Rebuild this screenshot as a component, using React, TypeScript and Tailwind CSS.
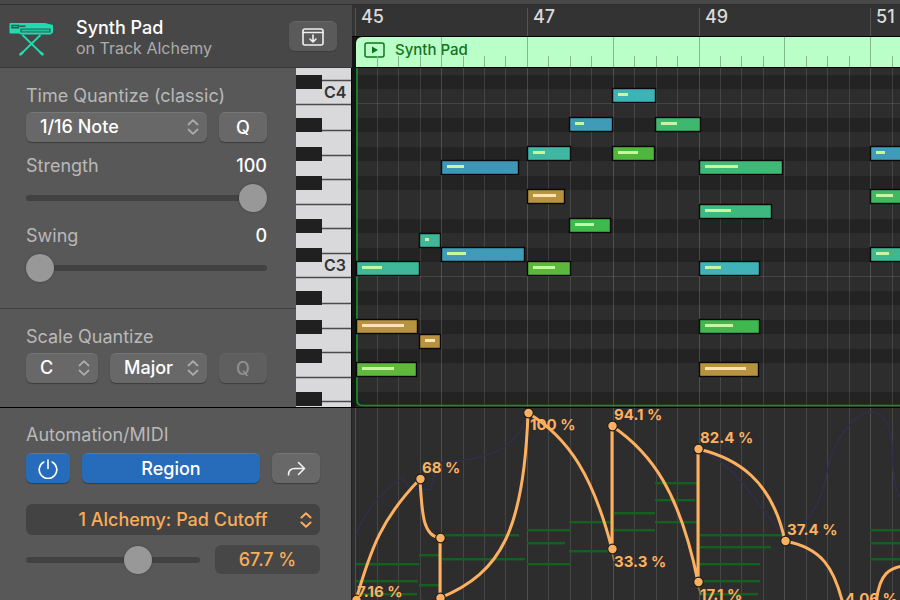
import { useState } from 'react';
import type { ReactNode } from 'react';
import clsx from 'clsx';

// Timeline geometry, shared by the ruler, the region, the roll and the automation lane
const ORIGIN = 3.3;
const BEAT = 21.45;
const SEMITONE = 14.42;
const C3_TOP = 193.4;
const ROLL_HEIGHT = 339;
const BARS = [45, 47, 49, 51];
const TICKS = Array.from({ length: 160 }, (_, i) => i);

const tickX = (tick: number) => Math.round(ORIGIN + tick * BEAT);
const rowTop = (row: number) => Math.round(C3_TOP - row * SEMITONE);

interface Note {
  x: number;
  w: number;
  // semitones above C3
  row: number;
  color: string;
  velocity: number;
}

const NOTES: Note[] = [
  { x: 4, w: 63, row: 0, color: '#3eb899', velocity: 20 },
  { x: 175, w: 43, row: 0, color: '#5cb83c', velocity: 22 },
  { x: 347, w: 60, row: 0, color: '#3fb3b8', velocity: 16 },
  { x: 89, w: 83, row: 1, color: '#3f9bb8', velocity: 19 },
  { x: 518, w: 64, row: 1, color: '#3eb890', velocity: 13 },
  { x: 67, w: 21, row: 2, color: '#3eb899', velocity: 4 },
  { x: 217, w: 41, row: 3, color: '#3fb84c', velocity: 19 },
  { x: 347, w: 72, row: 4, color: '#3eb87f', velocity: 26 },
  { x: 175, w: 37, row: 5, color: '#b8933f', velocity: 23 },
  { x: 518, w: 64, row: 5, color: '#3fb860', velocity: 17 },
  { x: 89, w: 77, row: 7, color: '#3f97b8', velocity: 17 },
  { x: 347, w: 83, row: 7, color: '#3fb878', velocity: 33 },
  { x: 175, w: 43, row: 8, color: '#3eb8a2', velocity: 12 },
  { x: 260, w: 42, row: 8, color: '#4fb83c', velocity: 20 },
  { x: 518, w: 64, row: 8, color: '#3f9bb8', velocity: 9 },
  { x: 217, w: 43, row: 10, color: '#3f9bb8', velocity: 9 },
  { x: 303, w: 45, row: 10, color: '#3eb86e', velocity: 16 },
  { x: 260, w: 43, row: 12, color: '#3fb2b8', velocity: 10 },
  { x: 4, w: 61, row: -4, color: '#b8933f', velocity: 42 },
  { x: 347, w: 60, row: -4, color: '#3fb852', velocity: 28 },
  { x: 67, w: 21, row: -5, color: '#b8933f', velocity: 10 },
  { x: 4, w: 60, row: -7, color: '#5fb83c', velocity: 32 },
  { x: 347, w: 59, row: -7, color: '#b8933f', velocity: 41 },
];

// [x, y, width] of the region's notes, seen behind the automation curve
const GHOST_NOTES = [
  [4, 156, 63], [4, 173, 62], [4, 186, 61],
  [67, 147, 21], [67, 177, 21],
  [89, 127, 78], [89, 151, 84],
  [175, 122, 44], [175, 135, 38], [175, 156, 44],
  [217, 114, 43], [217, 143, 41],
  [261, 105, 42], [261, 122, 42],
  [303, 75, 43], [303, 92, 40], [303, 114, 43],
  [348, 127, 84], [348, 139, 71], [348, 156, 60], [348, 173, 60], [348, 186, 58],
  [518, 122, 64], [518, 135, 64], [518, 151, 64],
];

const POINTS = [
  [4, 192], [68, 71], [88, 130], [88, 190], [176, 5], [260, 141],
  [260, 18], [346, 174], [346, 41], [433, 133],
];

const POINT_LABELS = [
  { text: '7.16 %', x: 5, y: 189 },
  { text: '68 %', x: 70, y: 65 },
  { text: '100 %', x: 178, y: 22 },
  { text: '94.1 %', x: 262, y: 12 },
  { text: '33.3 %', x: 262, y: 159 },
  { text: '82.4 %', x: 348, y: 35 },
  { text: '17.1 %', x: 348, y: 192 },
  { text: '37.4 %', x: 435, y: 127 },
  { text: '4.06 %', x: 493, y: 196 },
];

const BLACK_KEY_STEPS = [1, 3, 6, 8, 10];
const ROWS = Array.from({ length: 26 }, (_, i) => i - 11);
const isBlackKey = (row: number) => BLACK_KEY_STEPS.includes((row + 24) % 12);

function Chevrons({ className }: { className?: string }) {
  return (
    <svg className={clsx('pointer-events-none absolute top-1/2 h-4 w-3 -translate-y-1/2', className)} viewBox="0 0 12 16" fill="none" stroke="currentColor" strokeLinecap="round" strokeLinejoin="round">
      <path d="M1.5 5.5 6 1.2l4.5 4.3M1.5 10.5 6 14.8l4.5-4.3" />
    </svg>
  );
}

interface PopupProps {
  label: string;
  options: string[];
  className?: string;
}

function Popup({ label, options, className }: PopupProps) {
  return (
    <div className={clsx('relative', className)}>
      <select
        aria-label={label}
        className="h-[30px] w-full appearance-none rounded-md border-t border-[#777] bg-[#686868] pr-6 pb-0.5 pl-3.5 text-[18px] font-medium text-white shadow-[0_1px_1px_#3c3c3c]"
      >
        {options.map((option) => (
          <option key={option}>{option}</option>
        ))}
      </select>
      <Chevrons className="right-2 stroke-[1.8] text-[#ababab]" />
    </div>
  );
}

interface PushButtonProps {
  label: string;
  className?: string;
  disabled?: boolean;
  children: ReactNode;
}

function PushButton({ label, className, disabled, children }: PushButtonProps) {
  return (
    <button
      type="button"
      aria-label={label}
      disabled={disabled}
      className={clsx('flex h-[30px] items-center justify-center rounded-md border-t text-[18px] font-medium shadow-[0_1px_1px_#3c3c3c]', className)}
    >
      {children}
    </button>
  );
}

function Slider({ id, label, initial, className }: { id: string; label?: string; initial: number; className?: string }) {
  const [value, setValue] = useState(initial);
  return (
    <input
      id={id}
      aria-label={label}
      type="range"
      min={0}
      max={100}
      value={value}
      onChange={(e) => setValue(Number(e.target.value))}
      className={clsx(
        'block h-7 appearance-none bg-transparent',
        '[&::-webkit-slider-runnable-track]:h-1.5 [&::-webkit-slider-runnable-track]:rounded-full [&::-webkit-slider-runnable-track]:bg-[#424242]',
        '[&::-webkit-slider-thumb]:-mt-[11px] [&::-webkit-slider-thumb]:size-7 [&::-webkit-slider-thumb]:appearance-none [&::-webkit-slider-thumb]:rounded-full [&::-webkit-slider-thumb]:bg-[#989898] [&::-webkit-slider-thumb]:shadow-[0_0_2px_#3a3a3a]',
        className,
      )}
    />
  );
}

function SynthIcon() {
  return (
    <svg className="h-[34px] w-[45px]" viewBox="0 0 45 34" fill="none">
      <path d="M1.500 1H36L44 3V10.500L41.500 12.500H12L10 11.500H1.500Q.5 11.500.5 10.500V2Q.5 1 1.500 1Z" fill="#1fdcb0" />
      <path d="M3 3.500H9.500V5.800H3ZM10.500 4.200H16.500" stroke="#2f5a50" strokeWidth="1.4" />
      <path d="M12 7H41V10H12Z" fill="#27c19e" stroke="#2f5a50" strokeWidth="1.200" />
      <path d="M13.500 13 33 32M31.500 13 12 32" stroke="#1fdcb0" strokeWidth="1.8" />
      <path d="M11.500 32.300l1.800-1.600M33.500 32.300l-1.800-1.600" stroke="#1fdcb0" strokeWidth="2.600" strokeLinecap="round" />
    </svg>
  );
}

function TrackHeader() {
  return (
    <header className="flex h-[63px] items-center border-b border-[#383838] bg-[#474747] pr-[15px] pl-[9px]">
      <div className="pt-1.5">
        <SynthIcon />
      </div>
      <div className="ml-[22px] flex-1 pt-[3px]">
        <h1 className="text-[18px] leading-[21px] font-medium text-white">Synth Pad</h1>
        <p className="text-[16px] leading-[21px] text-[#acacac]">on Track Alchemy</p>
      </div>
      <PushButton label="Show in inspector" className="w-12 border-[#666] bg-[#5a5a5a] text-[#f0f0f0]">
        <svg className="h-[18px] w-[22px]" viewBox="0 0 22 18" fill="none" stroke="currentColor" strokeWidth="1.6" strokeLinecap="round" strokeLinejoin="round">
          <rect x="1" y="1" width="20" height="16" rx="2" />
          <path d="M1 4.500h20M11 7v6.500M8 11l3 3 3-3" />
        </svg>
      </PushButton>
    </header>
  );
}

function QuantizePanel() {
  return (
    <div className="flex flex-1 flex-col bg-[#585858] text-[18px] leading-6 text-[#b8b8b8]">
      <section className="border-b border-[#414141] pt-4 pr-[29px] pb-[26px] pl-[26px]">
        <h2>Time Quantize (classic)</h2>
        <div className="mt-1 flex gap-3">
          <Popup label="Time Quantize" options={['1/16 Note', '1/8 Note']} className="flex-1" />
          <PushButton label="Quantize" className="w-12 border-[#777] bg-[#686868] text-white">Q</PushButton>
        </div>
        <div className="mt-3 flex justify-between">
          <label htmlFor="strength">Strength</label>
          <output htmlFor="strength" className="font-medium text-white">100</output>
        </div>
        <Slider id="strength" initial={100} className="mt-1.5 w-full" />
        <div className="mt-3 flex justify-between">
          <label htmlFor="swing">Swing</label>
          <output htmlFor="swing" className="font-medium text-white">0</output>
        </div>
        <Slider id="swing" initial={0} className="mt-1.5 w-full" />
      </section>
      <section className="pt-4 pr-[29px] pl-[26px]">
        <h2>Scale Quantize</h2>
        <div className="mt-1 flex gap-3">
          <Popup label="Scale root" options={['C', 'D']} className="w-[72px]" />
          <Popup label="Scale" options={['Major', 'Minor']} className="flex-1" />
          <PushButton label="Quantize to scale" disabled className="w-12 border-[#636363] bg-[#5f5f5f] text-[#8f8f8f]">Q</PushButton>
        </div>
      </section>
    </div>
  );
}

function Keyboard() {
  // bottom edges of the white keys
  const edges = [12, 36, 62, 87, 111, 136, 160, 185, 209, 235, 260, 284, 309, 333];
  return (
    <svg className="w-14 shrink-0 border-r border-black bg-[#d9d9dc]" height={ROLL_HEIGHT}>
      {edges.map((y) => (
        <line key={y} x1={0} x2={55} y1={y + 0.5} y2={y + 0.5} stroke="#4a4a4c" strokeWidth={1.4} />
      ))}
      {ROWS.filter(isBlackKey).map((row) => (
        <rect key={row} x={0} y={rowTop(row) + 1} width={26} height={14} fill="#202020" />
      ))}
      <g fontSize={16} fontWeight={600} fill="#333335">
        <text x={28} y={30}>C4</text>
        <text x={28} y={203}>C3</text>
      </g>
    </svg>
  );
}

function Ruler() {
  return (
    <div className="relative h-8 overflow-hidden border-b border-black bg-[#333]">
      {BARS.map((bar, i) => (
        <span
          key={bar}
          className="absolute top-[3px] bottom-0 border-l border-[#555] pl-[5px] text-[18px] leading-[18px] font-medium text-[#dadada]"
          style={{ left: tickX(i * 8) }}
        >
          {bar}
        </span>
      ))}
    </div>
  );
}

function RegionBar() {
  return (
    <div className="relative ml-1 flex h-[31px] items-center gap-2.5 overflow-hidden rounded-tl-md border-b border-black bg-[#bbffc8] pb-1 pl-2 text-[#10741c]">
      <svg className="h-4 w-[21px]" viewBox="0 0 21 16">
        <rect x="1" y="1" width="19" height="14" rx="2" fill="none" stroke="currentColor" strokeWidth="1.5" />
        <path d="M8 4.500v7l6-3.500Z" fill="currentColor" />
      </svg>
      <span className="text-[15px] font-medium">Synth Pad</span>
      <svg className="absolute inset-0 h-full w-full" shapeRendering="crispEdges">
        {TICKS.slice(1).map((tick) => (
          <rect key={tick} x={tickX(tick) - 4} y={tick % 4 ? 19 : 0} width={1} height={31} fill="#84b88d" />
        ))}
      </svg>
    </div>
  );
}

function PianoRoll() {
  return (
    <svg className="block w-full bg-[#2d2d2d]" height={ROLL_HEIGHT}>
      {ROWS.filter(isBlackKey).map((row) => (
        <rect key={row} x={0} y={rowTop(row) + 1} width="100%" height={14} fill="#232323" />
      ))}
      {[0, 12].map((row) => (
        <rect key={row} x={0} y={rowTop(row) + 15} width="100%" height={1} fill="#434343" />
      ))}
      {TICKS.map((tick) => (
        <rect key={tick} x={tickX(tick)} y={0} width={1} height={ROLL_HEIGHT} fill="#fff" opacity={tick % 4 ? 0.12 : 0.17} />
      ))}
      <rect x={0} y={0} width={4} height={ROLL_HEIGHT} fill="#151515" />
      <path d="M5 0V332Q5 337.500 10.500 337.500H4000" fill="none" stroke="#15922a" strokeWidth={1.6} />
      {NOTES.map((note) => (
        <g key={`${note.x}-${note.row}`}>
          <rect x={note.x + 0.5} y={rowTop(note.row) + 0.5} width={note.w} height={14} fill={note.color} stroke="#080808" strokeWidth={1.4} />
          <rect x={note.x + 6} y={rowTop(note.row) + 5} width={note.velocity} height={3} fill={note.color === '#b8933f' ? '#ffe3b4' : '#c8f5a2'} />
        </g>
      ))}
    </svg>
  );
}

function AutomationPanel() {
  const [amount, setAmount] = useState('67.7 %');
  const [enabled, setEnabled] = useState(true);

  return (
    <section className="w-[352px] shrink-0 border-r border-[#222] bg-[#585858] pt-[15px] pr-[31px] pl-[26px] text-[18px]">
      <h2 className="leading-6 text-[#b8b8b8]">Automation/MIDI</h2>
      <div className="mt-1.5 flex gap-3">
        <button
          type="button"
          aria-label="Automation on"
          aria-pressed={enabled}
          onClick={() => setEnabled(!enabled)}
          className="flex h-[30px] w-11 items-center justify-center rounded-md border-t border-[#3a80cf] bg-[#266cbb] text-white shadow-[0_1px_1px_#3c3c3c]"
        >
          <svg className="size-5" viewBox="0 0 20 20" fill="none" stroke="currentColor" strokeWidth="1.6" strokeLinecap="round">
            <path d="M10 1v8.500M5.800 3a8.800 8.800 0 1 0 8.400 0" />
          </svg>
        </button>
        <PushButton label="Region" className="flex-1 border-[#3a80cf] bg-[#266cbb] text-white">Region</PushButton>
        <PushButton label="Go to track" className="w-12 border-[#777] bg-[#686868] text-[#f2f2f2]">
          <svg className="h-4 w-[19px]" viewBox="0 0 19 16" fill="none" stroke="currentColor" strokeWidth="1.600" strokeLinecap="round" strokeLinejoin="round">
            <path d="M11.500 1.500 17.500 7.500l-6 6M17 7.500H8C3.500 7.500 1.500 9.500 1.500 14" />
          </svg>
        </PushButton>
      </div>
      <div className="relative mt-[21px]">
        <select
          aria-label="Automation parameter"
          className="h-[31px] w-full appearance-none rounded-md bg-[#434343] px-6 text-[18px] font-medium text-[#f9ad5b] [text-align-last:center]"
        >
          <option>1 Alchemy: Pad Cutoff</option>
        </select>
        <Chevrons className="right-2 stroke-2 text-[#f9ad5b]" />
      </div>
      <div className="mt-2.5 flex items-center gap-[15px]">
        <Slider id="cutoff" label="Pad Cutoff" initial={67} className="min-w-0 flex-1" />
        <input
          aria-label="Pad Cutoff value"
          value={amount}
          onChange={(e) => setAmount(e.target.value)}
          className="h-[29px] w-[105px] rounded-md bg-[#474747] text-center text-[18px] font-medium text-[#f9ad5b]"
        />
      </div>
    </section>
  );
}

function AutomationLane() {
  return (
    <svg className="min-w-0 flex-1 bg-[#2d2d2d]">
      {TICKS.map((tick) => (
        <rect key={tick} x={tickX(tick)} y={0} width={1} height="100%" fill="#fff" opacity={tick % 4 ? 0.12 : 0.17} />
      ))}
      {/* curve of the parameter underneath */}
      <path
        d="M4 127C14 100 30 84 51 69Q54 78 60 80L78 82Q84 62 88 55C120 52 140 48 155 37Q172 24 176 5M347 41C385 58 400 90 431 127M453 114C470 95 474 70 476 60C480 38 500 5 519 4C533 5 538 18 540 35Q540 80 550 92"
        fill="none"
        stroke="#322e4e"
        strokeWidth={1.4}
      />
      {GHOST_NOTES.map(([x, y, w]) => (
        <rect key={`${x}-${y}`} x={x} y={y - 1} width={w} height={2.4} fill="#14611f" />
      ))}
      <path
        d="M4 192C19 140 30 110 68 71C70 110 72 128 88 130V190C150 165 172 120 176 5C217 30 241 68 260 141V18C300 45 328 85 346 174V41C385 50 420 72 433 133C470 140 482 160 491 196M524 196C527 166 536 158 560 157"
        fill="none"
        stroke="#fdb160"
        strokeWidth={3}
        strokeLinejoin="round"
      />
      <path d="M260 145l2 8M346 179l3 8" stroke="#a87543" strokeWidth={1.4} />
      {POINTS.map(([x, y]) => (
        <circle key={`${x}-${y}`} cx={x + 0.5} cy={y} r={4.8} fill="#fdb160" stroke="#1c1c1c" strokeWidth={1.2} />
      ))}
      <g fontSize={15} fontWeight={700} fill="#fdb160">
        {POINT_LABELS.map(({ text, x, y }) => (
          <text key={text} x={x} y={y}>{text}</text>
        ))}
      </g>
    </svg>
  );
}

export default function App() {
  return (
    <main className="flex h-screen flex-col overflow-hidden bg-[#2d2d2d] font-['Inter','Open_Sans',sans-serif]">
      <div className="h-[5px] shrink-0 border-b border-[#2e2e2e] bg-[#484848]" />
      <div className="flex shrink-0 border-b border-black">
        <div className="flex w-[352px] shrink-0 flex-col">
          <TrackHeader />
          <div className="flex flex-1">
            <QuantizePanel />
            <Keyboard />
          </div>
        </div>
        <div className="min-w-0 flex-1 bg-[#151515]">
          <Ruler />
          <RegionBar />
          <PianoRoll />
        </div>
      </div>
      <div className="flex min-h-0 flex-1">
        <AutomationPanel />
        <AutomationLane />
      </div>
    </main>
  );
}
